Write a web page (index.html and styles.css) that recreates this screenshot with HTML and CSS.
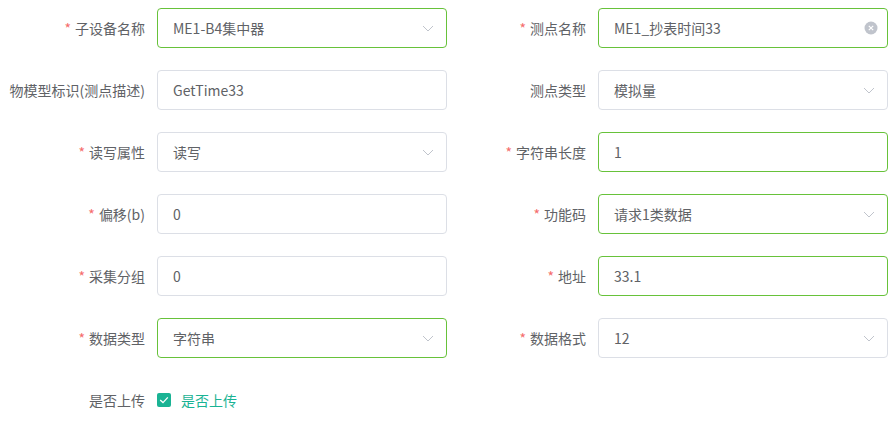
FILE: index.html
```html
<!DOCTYPE html>
<html lang="zh-CN">
<head>
	<meta charset="utf-8" />
	<title>测点编辑</title>
	<link rel="stylesheet" href="styles.css">
</head>
<body>
<form class="pointForm">
	<div class="formItem">
		<label class="itemLabel required">子设备名称</label>
		<div class="field select success">
			<span class="value">ME1-B4集中器</span>
			<svg class="arrow" width="12" height="7" viewBox="0 0 12 7"><path d="M1 1 L6 6 L11 1" fill="none" stroke="#c0c4cc" stroke-width="1"/></svg>
		</div>
	</div>
	<div class="formItem">
		<label class="itemLabel required">测点名称</label>
		<div class="field success">
			<span class="value">ME1_抄表时间33</span>
			<svg class="clear" width="14" height="14" viewBox="0 0 14 14"><circle cx="7" cy="7" r="6.5" fill="#c0c4cc"/><path d="M4.8 4.8 L9.2 9.2 M9.2 4.8 L4.8 9.2" stroke="#fff" stroke-width="1.2"/></svg>
		</div>
	</div>

	<div class="formItem">
		<label class="itemLabel">物模型标识(测点描述)</label>
		<div class="field">
			<span class="value">GetTime33</span>
		</div>
	</div>
	<div class="formItem">
		<label class="itemLabel">测点类型</label>
		<div class="field select">
			<span class="value">模拟量</span>
			<svg class="arrow" width="12" height="7" viewBox="0 0 12 7"><path d="M1 1 L6 6 L11 1" fill="none" stroke="#c0c4cc" stroke-width="1"/></svg>
		</div>
	</div>

	<div class="formItem">
		<label class="itemLabel required">读写属性</label>
		<div class="field select">
			<span class="value">读写</span>
			<svg class="arrow" width="12" height="7" viewBox="0 0 12 7"><path d="M1 1 L6 6 L11 1" fill="none" stroke="#c0c4cc" stroke-width="1"/></svg>
		</div>
	</div>
	<div class="formItem">
		<label class="itemLabel required">字符串长度</label>
		<div class="field success">
			<span class="value">1</span>
		</div>
	</div>

	<div class="formItem">
		<label class="itemLabel required">偏移(b)</label>
		<div class="field">
			<span class="value">0</span>
		</div>
	</div>
	<div class="formItem">
		<label class="itemLabel required">功能码</label>
		<div class="field select success">
			<span class="value">请求1类数据</span>
			<svg class="arrow" width="12" height="7" viewBox="0 0 12 7"><path d="M1 1 L6 6 L11 1" fill="none" stroke="#c0c4cc" stroke-width="1"/></svg>
		</div>
	</div>

	<div class="formItem">
		<label class="itemLabel required">采集分组</label>
		<div class="field">
			<span class="value">0</span>
		</div>
	</div>
	<div class="formItem">
		<label class="itemLabel required">地址</label>
		<div class="field success">
			<span class="value">33.1</span>
		</div>
	</div>

	<div class="formItem">
		<label class="itemLabel required">数据类型</label>
		<div class="field select success">
			<span class="value">字符串</span>
			<svg class="arrow" width="12" height="7" viewBox="0 0 12 7"><path d="M1 1 L6 6 L11 1" fill="none" stroke="#c0c4cc" stroke-width="1"/></svg>
		</div>
	</div>
	<div class="formItem">
		<label class="itemLabel required">数据格式</label>
		<div class="field select">
			<span class="value">12</span>
			<svg class="arrow" width="12" height="7" viewBox="0 0 12 7"><path d="M1 1 L6 6 L11 1" fill="none" stroke="#c0c4cc" stroke-width="1"/></svg>
		</div>
	</div>

	<div class="formItem">
		<label class="itemLabel">是否上传</label>
		<div class="check">
			<span class="checkBox">
				<svg width="10" height="8" viewBox="0 0 10 8"><path d="M1.2 4 L4 6.6 L8.8 1.4" fill="none" stroke="#fff" stroke-width="1.3"/></svg>
			</span>
			<span class="checkText">是否上传</span>
		</div>
	</div>
</form>
</body>
</html>
```

FILE: styles.css
```css
body{
	margin:0;
	background:#fff;
	font-family:"Noto Sans CJK SC","Noto Sans",sans-serif;
	font-size:14px;
	color:#606266;
}

.pointForm{
	display:grid;
	grid-template-columns:447px 441px;
	row-gap:22px;
	padding-top:8px;
}

.formItem{
	display:flex;
	align-items:center;
	height:40px;
}

.itemLabel{
	width:157px;
	flex:none;
	box-sizing:border-box;
	padding-right:12px;
	text-align:right;
	white-space:nowrap;
	color:#606266;
}

/* right column labels are a bit narrower */
.formItem:nth-child(even) .itemLabel{
	width:151px;
}

.itemLabel.required::before{
	content:"*";
	color:#f56c6c;
	margin-right:4px;
}

.field{
	width:290px;
	height:40px;
	flex:none;
	box-sizing:border-box;
	border:1px solid #dcdfe6;
	border-radius:4px;
	padding:0 15px;
	display:flex;
	align-items:center;
	justify-content:space-between;
}

.field.success{
	border-color:#67c23a;
}

.value{
	color:#606266;
	white-space:nowrap;
}

.arrow{
	margin-right:-3px;
}

.clear{
	margin-right:-6px;
}

.check{
	display:flex;
	align-items:center;
}

.checkBox{
	width:14px;
	height:14px;
	border-radius:2px;
	background:#1ab394;
	display:flex;
	align-items:center;
	justify-content:center;
}

.checkText{
	margin-left:10px;
	color:#1ab394;
}
```
